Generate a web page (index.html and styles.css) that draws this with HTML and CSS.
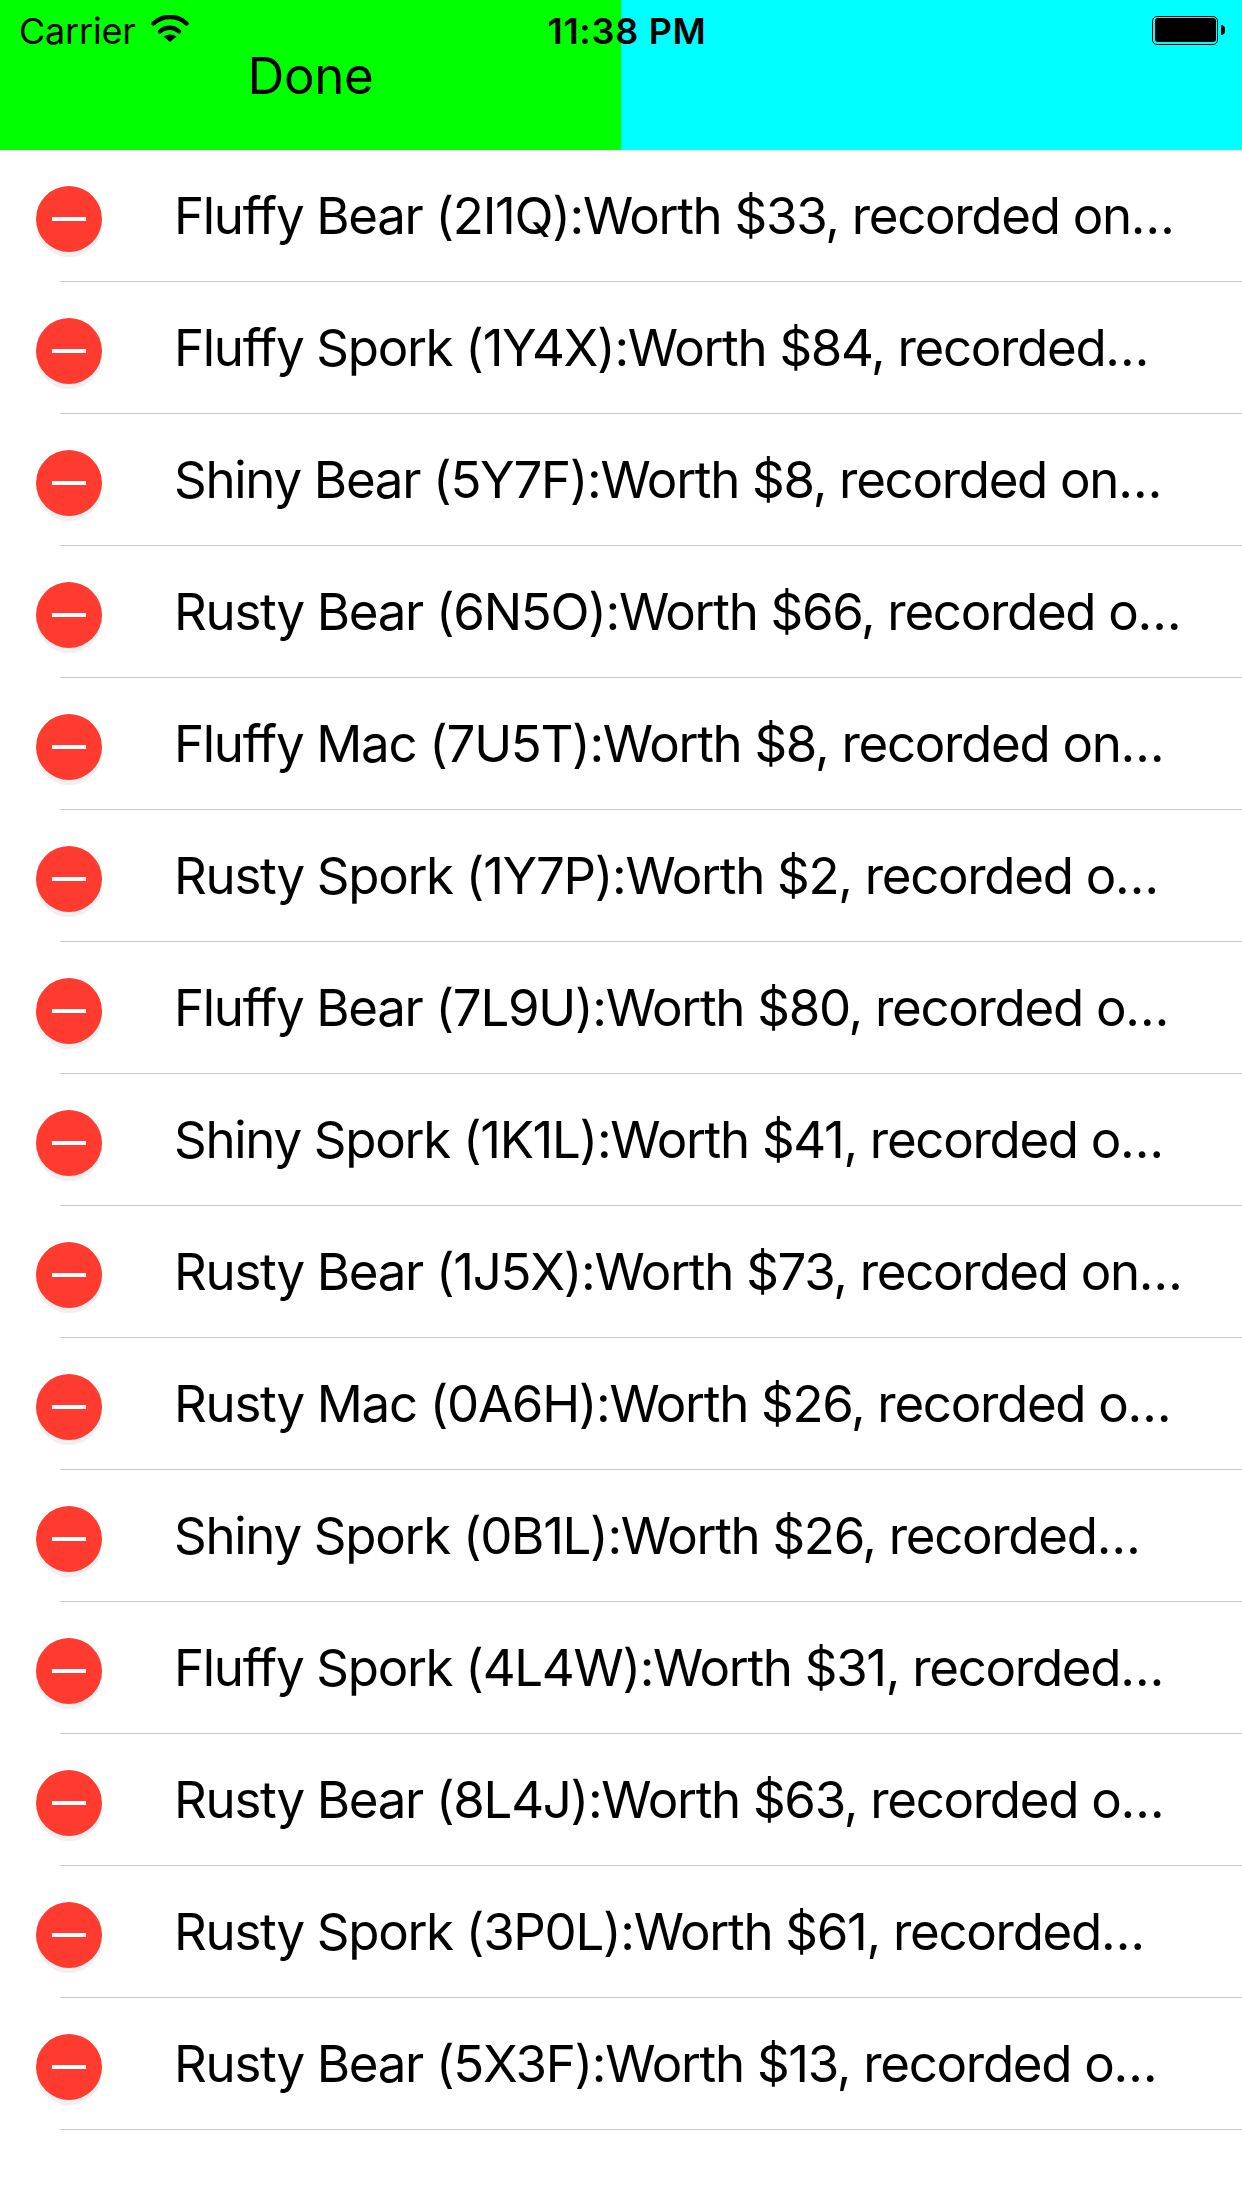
FILE: index.html
```html
<!DOCTYPE html>
<html lang="en">
<head>
<meta charset="utf-8">
<title>Items</title>
<link rel="stylesheet" href="styles.css">
</head>
<body>
<header class="nav">
  <div class="status">
    <div class="status-left">
      <span class="carrier">Carrier</span>
      <svg class="wifi" viewBox="0 0 38 28" width="38" height="28"><path class="wifi-arc" d="M2.5 8.5 A24 24 0 0 1 35.5 8.5"/><path class="wifi-arc" d="M9 16.5 A14 14 0 0 1 28 16.5"/><path d="M12.5 21.5 Q19 17.5 25.5 21.5 L19 27 Z"/></svg>
    </div>
    <span class="time">11:38 PM</span>
    <div class="status-right">
      <span class="battery"><span class="battery-fill"></span></span>
      <span class="battery-nub"></span>
    </div>
  </div>
  <div class="nav-btn nav-left">Done</div>
  <div class="nav-btn nav-right"></div>
</header>
<ul class="list">
  <li class="row"><span class="del"><span class="del-bar"></span></span><span class="label">Fluffy Bear (2I1Q):Worth $33, recorded on…</span></li>
  <li class="row"><span class="del"><span class="del-bar"></span></span><span class="label">Fluffy Spork (1Y4X):Worth $84, recorded…</span></li>
  <li class="row"><span class="del"><span class="del-bar"></span></span><span class="label">Shiny Bear (5Y7F):Worth $8, recorded on…</span></li>
  <li class="row"><span class="del"><span class="del-bar"></span></span><span class="label">Rusty Bear (6N5O):Worth $66, recorded o…</span></li>
  <li class="row"><span class="del"><span class="del-bar"></span></span><span class="label">Fluffy Mac (7U5T):Worth $8, recorded on…</span></li>
  <li class="row"><span class="del"><span class="del-bar"></span></span><span class="label">Rusty Spork (1Y7P):Worth $2, recorded o…</span></li>
  <li class="row"><span class="del"><span class="del-bar"></span></span><span class="label">Fluffy Bear (7L9U):Worth $80, recorded o…</span></li>
  <li class="row"><span class="del"><span class="del-bar"></span></span><span class="label">Shiny Spork (1K1L):Worth $41, recorded o…</span></li>
  <li class="row"><span class="del"><span class="del-bar"></span></span><span class="label">Rusty Bear (1J5X):Worth $73, recorded on…</span></li>
  <li class="row"><span class="del"><span class="del-bar"></span></span><span class="label">Rusty Mac (0A6H):Worth $26, recorded o…</span></li>
  <li class="row"><span class="del"><span class="del-bar"></span></span><span class="label">Shiny Spork (0B1L):Worth $26, recorded…</span></li>
  <li class="row"><span class="del"><span class="del-bar"></span></span><span class="label">Fluffy Spork (4L4W):Worth $31, recorded…</span></li>
  <li class="row"><span class="del"><span class="del-bar"></span></span><span class="label">Rusty Bear (8L4J):Worth $63, recorded o…</span></li>
  <li class="row"><span class="del"><span class="del-bar"></span></span><span class="label">Rusty Spork (3P0L):Worth $61, recorded…</span></li>
  <li class="row"><span class="del"><span class="del-bar"></span></span><span class="label">Rusty Bear (5X3F):Worth $13, recorded o…</span></li>
</ul>
</body>
</html>
```
FILE: styles.css
```css
* { box-sizing: border-box; }
html, body { margin: 0; padding: 0; background: #fff; }
body {
  width: 1242px;
  height: 2208px;
  overflow: hidden;
  font-family: Inter, "Noto Sans", "Liberation Sans", sans-serif;
  color: #000;
}
.nav {
  position: relative;
  display: flex;
  height: 150px;
}
.nav-btn {
  flex: 0 0 50%;
  display: flex;
  align-items: center;
  justify-content: center;
  font-size: 51px;
  letter-spacing: -0.3px;
}
.nav-left { background: #00ff00; }
.nav-right { background: #00ffff; }
.status {
  position: absolute;
  top: 0;
  left: 0;
  right: 0;
  height: 62px;
  display: grid;
  grid-template-columns: 1fr auto 1fr;
  align-items: center;
  padding: 0 17px 0 19px;
  font-size: 36px;
}
.status-left { display: flex; align-items: center; gap: 15px; }
.carrier { letter-spacing: -0.2px; }
.wifi { fill: #000; margin-top: -4px; }
.wifi-arc { fill: none; stroke: #000; stroke-width: 4.4; stroke-linecap: round; }
.time { font-weight: 600; margin-left: 10px; letter-spacing: 0.7px; }
.status-right { display: flex; align-items: center; justify-content: flex-end; gap: 3px; }
.battery {
  width: 66px;
  height: 29px;
  border: 1.5px solid #000;
  border-radius: 5px;
  padding: 1.5px;
  display: flex;
  margin-top: -2px;
}
.battery-fill { flex: 1; background: #000; border-radius: 3px; }
.battery-nub {
  width: 4px;
  height: 10px;
  background: #000;
  border-radius: 0 4px 4px 0;
  margin-top: -2px;
}
.list { list-style: none; margin: 0; padding: 0; }
.row {
  position: relative;
  height: 132px;
  display: flex;
  align-items: center;
  padding-left: 36px;
}
.row::after {
  content: "";
  position: absolute;
  left: 60px;
  right: 0;
  bottom: 0;
  height: 1px;
  background: #c8c7cc;
}
.del {
  flex: none;
  width: 66px;
  height: 66px;
  border-radius: 50%;
  background: #ff3b30;
  box-shadow: 0 5px 0 #f0f0f0;
  display: flex;
  align-items: center;
  justify-content: center;
  margin-top: 6px;
}
.del-bar { width: 34px; height: 4px; background: #fff; }
.label {
  margin-left: 72px;
  font-size: 51px;
  letter-spacing: -1.3px;
  white-space: nowrap;
  margin-top: -2px;
}
```
